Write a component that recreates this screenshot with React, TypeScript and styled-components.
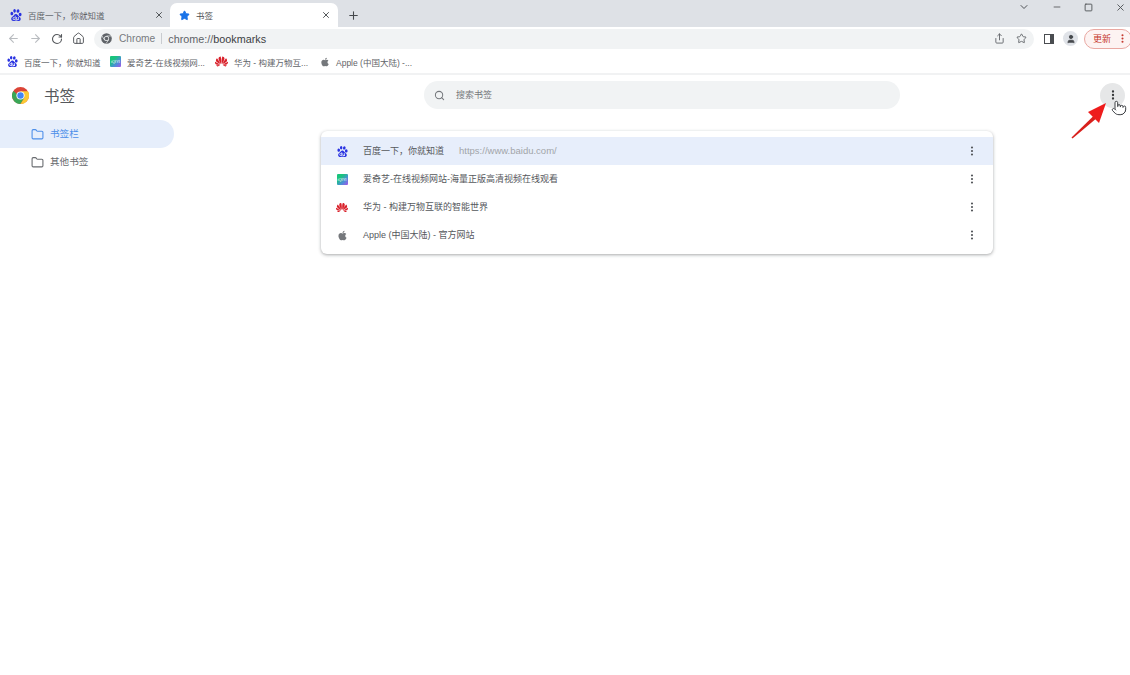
import React from 'react';
import styled, { createGlobalStyle } from 'styled-components';
import {
  ArrowLeft,
  ArrowRight,
  ChevronDown,
  EllipsisVertical,
  Folder,
  House,
  Minus,
  Plus,
  Pointer,
  RotateCw,
  Search,
  Share,
  Square,
  Star,
  User,
  X,
} from 'lucide-react';
import { FaApple } from 'react-icons/fa';
import { SiBaidu, SiHuawei } from 'react-icons/si';

const GlobalStyle = createGlobalStyle`
  html, body {
    margin: 0;
    padding: 0;
    background: #fff;
  }
  body {
    font-family: "Liberation Sans", "Noto Sans CJK SC", sans-serif;
    color: #5f6368;
  }
  * {
    box-sizing: border-box;
  }
`;

const Page = styled.div`
  position: relative;
  width: 1130px;
  height: 675px;
  overflow: hidden;
  background: #fff;
`;

const TabStrip = styled.div`
  display: flex;
  align-items: flex-end;
  height: 27px;
  background: #dee1e6;
`;

const Tab = styled.div<{ $active?: boolean }>`
  display: flex;
  align-items: center;
  width: ${p => (p.$active ? '168px' : '170px')};
  height: 24px;
  padding: ${p => (p.$active ? '0 7px 0 9px' : '0 6px 0 10px')};
  border-radius: 7px 7px 0 0;
  font-size: 8.5px;
  background: ${p => (p.$active ? '#fff' : 'transparent')};
  color: ${p => (p.$active ? '#4a4d51' : '#5f6368')};
`;

const TabTitle = styled.span`
  flex: 1;
  margin-left: 6px;
  white-space: nowrap;
`;

const NewTab = styled.div`
  display: flex;
  margin-left: 9px;
  margin-bottom: 5px;
  color: #45484c;
`;

const WindowControls = styled.div`
  display: flex;
  align-items: center;
  gap: 22px;
  height: 100%;
  margin-left: auto;
  padding: 0 4px 13px 0;
  color: #4f5256;
`;

const Toolbar = styled.div`
  display: flex;
  align-items: center;
  height: 23px;
  padding-left: 7px;
  background: #fff;
`;

const NavButton = styled.div<{ $off?: boolean }>`
  display: flex;
  width: 13px;
  margin-right: 9px;
  color: ${p => (p.$off ? '#b9bcc0' : '#54575b')};
`;

const Omnibox = styled.div`
  display: flex;
  flex: none;
  align-items: center;
  width: 940px;
  height: 20px;
  padding: 0 7px;
  border-radius: 10px;
  background: #f1f3f4;
  font-size: 10.2px;
`;

const ChromeSite = styled.span`
  margin-left: 7px;
  padding-right: 6px;
  border-right: 1px solid #c9ccd0;
  line-height: 11px;
  color: #777a7e;
`;

const Url = styled.span`
  margin-left: 6px;
  font-size: 10.8px;
  color: #5f6368;
  b {
    font-weight: 400;
    color: #3c4043;
  }
`;

const OmniActions = styled.div`
  display: flex;
  align-items: center;
  gap: 11px;
  margin-left: auto;
  color: #63666a;
`;

const ToolRight = styled.div`
  display: flex;
  flex: none;
  align-items: center;
  margin-left: 10px;
  color: #4a4d51;
`;

const Avatar = styled.div`
  display: flex;
  align-items: center;
  justify-content: center;
  width: 15px;
  height: 15px;
  margin-left: 9px;
  border-radius: 50%;
  background: #e0e3e8;
  color: #45484c;
`;

const UpdateButton = styled.div`
  display: flex;
  align-items: center;
  width: 48px;
  height: 20px;
  margin-left: 6px;
  padding-left: 8px;
  border: 1px solid #e9a8a2;
  border-radius: 10px;
  background: #fdf3f2;
  font-size: 9px;
  color: #c5372c;
  svg {
    margin-left: 6px;
  }
`;

const BookmarksBar = styled.div`
  display: flex;
  align-items: center;
  height: 25px;
  padding-left: 7px;
  border-bottom: 2px solid #f1f2f3;
  background: #fff;
  font-size: 8.5px;
`;

const Bookmark = styled.div<{ $width: number }>`
  display: flex;
  align-items: center;
  gap: 6px;
  width: ${p => p.$width}px;
  white-space: nowrap;
  color: #5f6368;
`;

const IqiyiIcon = styled.span<{ $size: number }>`
  display: flex;
  flex: none;
  align-items: center;
  justify-content: center;
  width: ${p => p.$size}px;
  height: ${p => p.$size}px;
  border-radius: 1px;
  background: linear-gradient(135deg, #19c37d 30%, #4a8fd8 65%, #a855e8);
  color: #fff;
  font-size: 4px;
`;

const Header = styled.header`
  display: flex;
  align-items: center;
  height: 40px;
  margin-bottom: 5px;
  padding: 0 5px 0 12px;
`;

const Brand = styled.div`
  display: flex;
  align-items: center;
  width: 412px;
  gap: 15px;
  font-size: 15.5px;
  color: #55585c;
`;

const SearchBox = styled.div`
  display: flex;
  align-items: center;
  gap: 11px;
  width: 476px;
  height: 28px;
  padding-left: 10px;
  border-radius: 14px;
  background: #f1f3f4;
  font-size: 9px;
  color: #75787c;
`;

const Raised = styled.span`
  padding-bottom: 2px;
`;

const HeaderMenu = styled.div`
  display: flex;
  align-items: center;
  justify-content: center;
  width: 25px;
  height: 25px;
  margin-left: auto;
  border-radius: 50%;
  background: #e6e7e8;
  color: #303235;
`;

const Body = styled.div`
  display: flex;
`;

const Sidebar = styled.nav`
  width: 321px;
`;

const SideItem = styled.div<{ $active?: boolean }>`
  display: flex;
  align-items: center;
  gap: 6px;
  width: 174px;
  height: 28px;
  padding-left: 31px;
  border-radius: 0 14px 14px 0;
  font-size: 9.6px;
  background: ${p => (p.$active ? '#e6eefb' : 'transparent')};
  color: ${p => (p.$active ? '#4d8fe9' : '#686b6f')};
`;

const Card = styled.section`
  width: 672px;
  height: 123px;
  margin-top: 11px;
  padding: 6px 0;
  border-radius: 6px;
  background: #fff;
  box-shadow: 0 1px 3px rgba(60, 64, 67, 0.35), 0 1px 4px rgba(60, 64, 67, 0.12);
`;

const Row = styled.div<{ $selected?: boolean }>`
  display: flex;
  align-items: center;
  height: 28px;
  padding: 0 15px;
  font-size: 9px;
  color: #55585c;
  background: ${p => (p.$selected ? '#e7eefb' : 'transparent')};
`;

const RowIcon = styled.span`
  display: flex;
  justify-content: center;
  width: 12px;
  margin-right: 15px;
`;

const RowUrl = styled.span`
  margin-left: 15px;
  padding-bottom: 2px;
  font-size: 9.5px;
  color: #a2a5a9;
`;

const RowMenu = styled.span`
  display: flex;
  margin-left: auto;
  color: #55585c;
`;

const Cursor = styled.div`
  position: absolute;
  left: 1111px;
  top: 100px;
  display: flex;
  color: #3c3f43;
`;

const Arrow = styled.svg`
  position: absolute;
  left: 1068px;
  top: 98px;
`;

const ChromeLogo = () => (
  <svg width="17" height="17" viewBox="0 0 48 48">
    <circle cx="24" cy="24" r="24" fill="#db4437" />
    <path d="M24 24 3.2 36A24 24 0 0 1 4 11l9 8z" fill="#3aa757" />
    <path d="M3.2 36A24 24 0 0 0 24 48l11-18-11-6z" fill="#3aa757" />
    <path d="M24 48A24 24 0 0 0 45 12H24l11 18z" fill="#fcc934" />
    <circle cx="24" cy="24" r="11.5" fill="#fff" />
    <circle cx="24" cy="24" r="9" fill="#4285f4" />
  </svg>
);

const SiteGlobe = () => (
  <svg width="11" height="11" viewBox="0 0 48 48">
    <circle cx="24" cy="24" r="23" fill="#5f6368" />
    <circle cx="24" cy="24" r="11" fill="#f1f3f4" />
    <circle cx="24" cy="24" r="8" fill="#5f6368" />
    <path d="M24 13h21M14 29 4 12M33 30 22 46" stroke="#f1f3f4" strokeWidth="3" />
  </svg>
);

const BaiduIcon = ({ size }: { size: number }) => <SiBaidu size={size} color="#2932e1" />;
const HuaweiIcon = ({ size }: { size: number }) => <SiHuawei size={size} color="#d9202a" />;
const AppleIcon = ({ size }: { size: number }) => <FaApple size={size} color="#75787c" />;

const bookmarks = [
  { title: '百度一下，你就知道', width: 103, icon: <BaiduIcon size={11} /> },
  { title: '爱奇艺-在线视频网...', width: 105, icon: <IqiyiIcon $size={11}>iQIYI</IqiyiIcon> },
  { title: '华为 - 构建万物互...', width: 105, icon: <HuaweiIcon size={13} /> },
  { title: 'Apple (中国大陆) -...', width: 110, icon: <AppleIcon size={10} /> },
];

const rows = [
  { title: '百度一下，你就知道', url: 'https://www.baidu.com/', icon: <BaiduIcon size={11} /> },
  { title: '爱奇艺-在线视频网站-海量正版高清视频在线观看', icon: <IqiyiIcon $size={11}>iQIYI</IqiyiIcon> },
  { title: '华为 - 构建万物互联的智能世界', icon: <HuaweiIcon size={13} /> },
  { title: 'Apple (中国大陆) - 官方网站', icon: <AppleIcon size={11} /> },
];

const App = () => (
  <Page>
    <GlobalStyle />
    <TabStrip>
      <Tab>
        <BaiduIcon size={12} />
        <TabTitle>百度一下，你就知道</TabTitle>
        <X size={10} strokeWidth={2.2} color="#45484c" />
      </Tab>
      <Tab $active>
        <Star size={11} fill="#1a73e8" color="#1a73e8" />
        <TabTitle>书签</TabTitle>
        <X size={10} strokeWidth={2.2} color="#45484c" />
      </Tab>
      <NewTab>
        <Plus size={13} strokeWidth={2} />
      </NewTab>
      <WindowControls>
        <ChevronDown size={12} />
        <Minus size={10} />
        <Square size={9} strokeWidth={2.4} />
        <X size={11} />
      </WindowControls>
    </TabStrip>

    <Toolbar>
      <NavButton $off>
        <ArrowLeft size={13} />
      </NavButton>
      <NavButton $off>
        <ArrowRight size={13} />
      </NavButton>
      <NavButton>
        <RotateCw size={12} strokeWidth={2.2} />
      </NavButton>
      <NavButton>
        <House size={13} strokeWidth={1.8} />
      </NavButton>
      <Omnibox>
        <SiteGlobe />
        <ChromeSite>Chrome</ChromeSite>
        <Url>
          chrome://<b>bookmarks</b>
        </Url>
        <OmniActions>
          <Share size={11} />
          <Star size={11} strokeWidth={2} />
        </OmniActions>
      </Omnibox>
      <ToolRight>
        <svg width="10" height="10" viewBox="0 0 10 10">
          <rect x="0.5" y="0.5" width="9" height="9" fill="none" stroke="currentColor" />
          <rect x="6" y="0.5" width="3.5" height="9" fill="currentColor" />
        </svg>
        <Avatar>
          <User size={10} fill="currentColor" />
        </Avatar>
        <UpdateButton>
          更新
          <EllipsisVertical size={11} strokeWidth={2.5} />
        </UpdateButton>
      </ToolRight>
    </Toolbar>

    <BookmarksBar>
      {bookmarks.map(item => (
        <Bookmark key={item.title} $width={item.width}>
          {item.icon}
          {item.title}
        </Bookmark>
      ))}
    </BookmarksBar>

    <Header>
      <Brand>
        <ChromeLogo />
        书签
      </Brand>
      <SearchBox>
        <Search size={11} strokeWidth={2.2} />
        <Raised>搜索书签</Raised>
      </SearchBox>
      <HeaderMenu>
        <EllipsisVertical size={12} strokeWidth={2.6} />
      </HeaderMenu>
    </Header>

    <Body>
      <Sidebar>
        <SideItem $active>
          <Folder size={13} />
          <Raised>书签栏</Raised>
        </SideItem>
        <SideItem>
          <Folder size={13} />
          <Raised>其他书签</Raised>
        </SideItem>
      </Sidebar>
      <Card>
        {rows.map((row, index) => (
          <Row key={row.title} $selected={index === 0}>
            <RowIcon>{row.icon}</RowIcon>
            <Raised>{row.title}</Raised>
            {row.url && <RowUrl>{row.url}</RowUrl>}
            <RowMenu>
              <EllipsisVertical size={12} strokeWidth={2.4} />
            </RowMenu>
          </Row>
        ))}
      </Card>
    </Body>

    <Arrow width="42" height="42" viewBox="0 0 42 42">
      <path d="M3.5 39.5 27 16.5l2.5 3L4.5 40.5z" fill="#d8201c" />
      <path d="M38 5 20 14l11 11z" fill="#ee1c1c" />
    </Arrow>
    <Cursor>
      <Pointer size={16} fill="#fff" strokeWidth={1.5} />
    </Cursor>
  </Page>
);

export default App;
